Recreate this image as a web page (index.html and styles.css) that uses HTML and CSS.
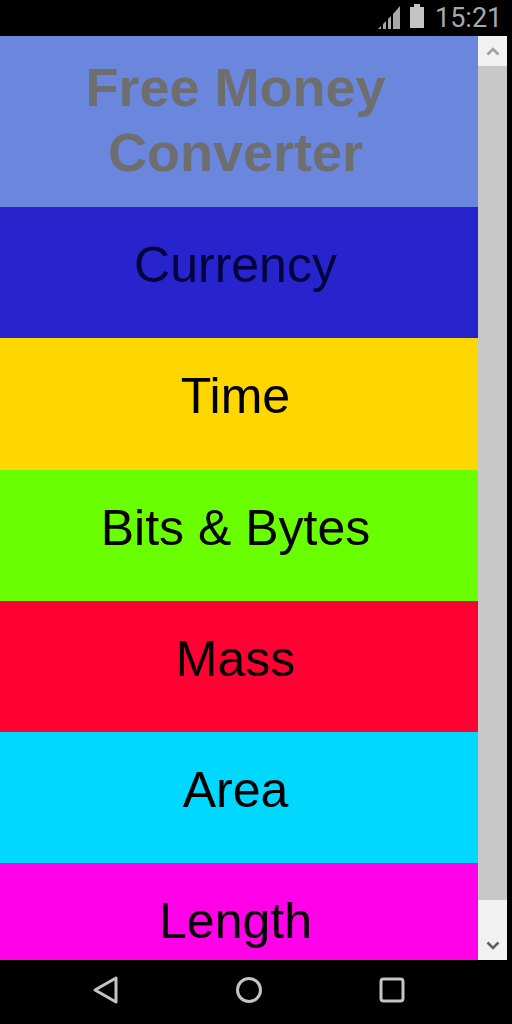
FILE: index.html
```html
<!DOCTYPE html>
<html lang="en">
<head>
    <meta charset="UTF-8">
    <meta name="viewport" content="width=device-width, initial-scale=1.0">
    <title>Free Money Converter</title>
    <link rel="stylesheet" href="styles.css">
</head>
<body>
    <div class="status-bar">
        <svg class="signal-icon" width="24" height="26" viewBox="0 0 24 26">
            <path d="M1 25L4 22V25ZM6 25V20L9 17V25ZM11 25V15L14 12V25ZM16 25V10L23 2V25Z" fill="#a8a8a8"/>
        </svg>
        <svg class="battery-icon" width="16" height="26" viewBox="0 0 16 26">
            <path d="M5 1H11V4H15V25H1V4H5Z" fill="#c4c4c4"/>
        </svg>
        <span class="clock">15:21</span>
    </div>

    <div class="main">
        <div class="menu">
            <div class="menu-title">Free Money<br>Converter</div>
            <div class="menu-item item-currency">Currency</div>
            <div class="menu-item item-time">Time</div>
            <div class="menu-item item-bits">Bits &amp; Bytes</div>
            <div class="menu-item item-mass">Mass</div>
            <div class="menu-item item-area">Area</div>
            <div class="menu-item item-length">Length</div>
        </div>
        <div class="scrollbar">
            <div class="scroll-btn scroll-up">
                <svg width="14" height="9" viewBox="0 0 14 9"><path d="M1.5 7.5L7 2L12.5 7.5" fill="none" stroke="#a0a0a0" stroke-width="2.6"/></svg>
            </div>
            <div class="scroll-thumb"></div>
            <div class="scroll-btn scroll-down">
                <svg width="14" height="9" viewBox="0 0 14 9"><path d="M1.5 1.5L7 7L12.5 1.5" fill="none" stroke="#606060" stroke-width="2.6"/></svg>
            </div>
        </div>
    </div>

    <div class="nav-bar">
        <svg class="nav-back" width="28" height="30" viewBox="0 0 28 30">
            <path d="M24 3V27L3 15Z" fill="none" stroke="#c4c4c4" stroke-width="3" stroke-linejoin="round"/>
        </svg>
        <svg class="nav-home" width="28" height="30" viewBox="0 0 28 30">
            <circle cx="14" cy="15" r="11.5" fill="none" stroke="#c4c4c4" stroke-width="3"/>
        </svg>
        <svg class="nav-recent" width="28" height="30" viewBox="0 0 28 30">
            <rect x="3" y="4" width="22" height="22" rx="2.5" fill="none" stroke="#c4c4c4" stroke-width="3"/>
        </svg>
    </div>
</body>
</html>
```

FILE: styles.css
```css
* {
    margin: 0;
    padding: 0;
    box-sizing: border-box;
}

html, body {
    height: 1024px;
    overflow: hidden;
}

body {
    font-family: 'Liberation Sans', Arial, sans-serif;
    background: #000;
    display: flex;
    flex-direction: column;
}

.status-bar {
    height: 36px;
    display: flex;
    align-items: center;
    padding-left: 377px;
}

.signal-icon {
    margin-top: -3px;
}

.battery-icon {
    margin-left: 8px;
    margin-top: -4px;
}

.clock {
    margin-left: 10px;
    font-family: Roboto, sans-serif;
    font-size: 27px;
    color: #a8a8a8;
}

.main {
    height: 924px;
    display: flex;
    padding-right: 5px;
}

.menu {
    width: 478px;
    overflow: hidden;
}

.menu-title {
    height: 171px;
    padding: 19px 7px 0 0;
    background: #6a87dd;
    color: #6e6e6e;
    font-size: 54px;
    font-weight: bold;
    line-height: 65px;
    text-align: center;
}

.menu-item {
    height: 131.25px;
    padding: 29px 7px 0 0;
    color: #000;
    font-size: 50px;
    line-height: 58px;
    text-align: center;
}

.item-currency { background: #2723cd; color: #04043c; }
.item-time { background: #ffd700; }
.item-bits { background: #6aff00; }
.item-mass { background: #ff0033; }
.item-area { background: #00d8ff; }
.item-length { background: #ff00e8; }

.scrollbar {
    width: 29px;
    display: flex;
    flex-direction: column;
}

.scroll-btn {
    background: #f1f1f1;
    display: flex;
    justify-content: center;
}

.scroll-up {
    height: 30px;
    align-items: center;
}

.scroll-thumb {
    flex: 1;
    background: #c8c8c8;
}

.scroll-down {
    height: 60px;
    align-items: flex-end;
    padding-bottom: 10px;
}

.nav-bar {
    height: 64px;
    position: relative;
}

.nav-bar svg {
    position: absolute;
    top: 15px;
}

.nav-back { left: 92px; }
.nav-home { left: 235px; }
.nav-recent { left: 378px; }
```
